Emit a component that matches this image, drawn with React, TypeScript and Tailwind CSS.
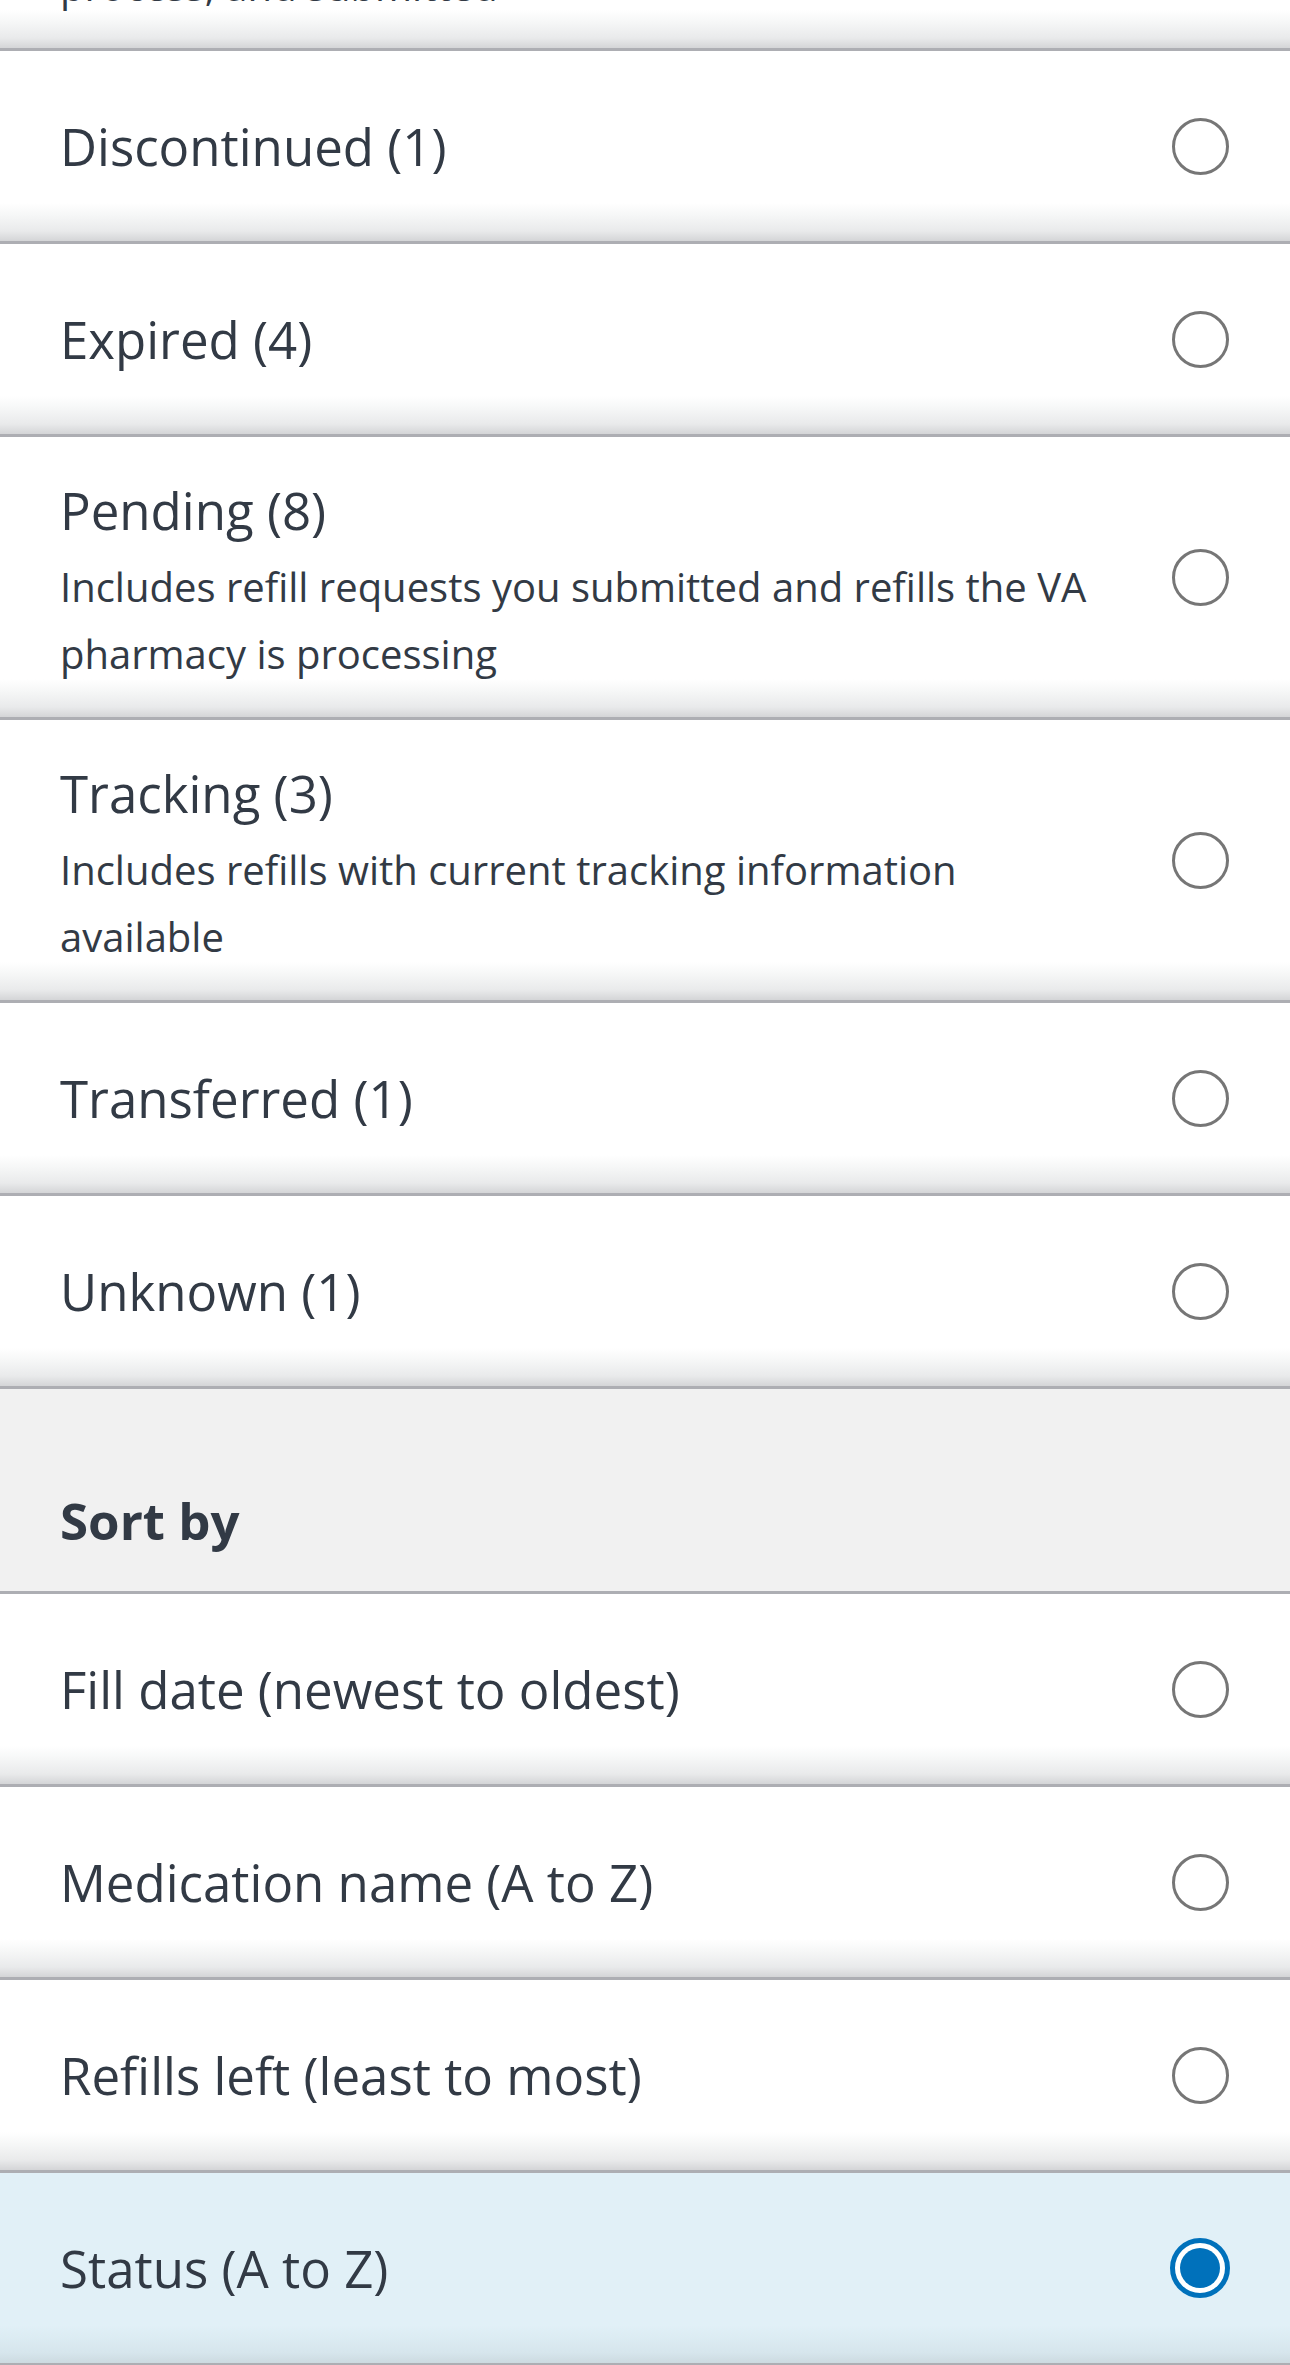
import React from "react";

type Item = { title: string; desc?: string[]; selected?: boolean };

const filters: Item[] = [
  { title: "Discontinued (1)" },
  { title: "Expired (4)" },
  {
    title: "Pending (8)",
    desc: [
      "Includes refill requests you submitted and refills the VA",
      "pharmacy is processing",
    ],
  },
  {
    title: "Tracking (3)",
    desc: ["Includes refills with current tracking information", "available"],
  },
  { title: "Transferred (1)" },
  { title: "Unknown (1)" },
];

const sorts: Item[] = [
  { title: "Fill date (newest to oldest)" },
  { title: "Medication name (A to Z)" },
  { title: "Refills left (least to most)" },
  { title: "Status (A to Z)", selected: true },
];

const NORMAL_BG =
  "bg-[linear-gradient(to_bottom,#ffffff_calc(100%_-_38px),#f6f7f7_calc(100%_-_26px),#e9eaeb_calc(100%_-_10px),#d4d5d7_100%)]";
const SELECTED_BG =
  "bg-[linear-gradient(to_bottom,#e1f0f7_calc(100%_-_38px),#dcecf3_calc(100%_-_26px),#d6e5ec_calc(100%_-_10px),#ccdae0_100%)]";

function Radio({ selected }: { selected?: boolean }) {
  return (
    <div className="flex h-[60px] w-[60px] shrink-0 items-center justify-center">
      {selected ? (
        <div className="flex h-[60px] w-[60px] items-center justify-center rounded-full border-[5px] border-[#0071bb] bg-white">
          <div className="h-[40px] w-[40px] rounded-full bg-[#0071bb]" />
        </div>
      ) : (
        <div className="h-[57px] w-[57px] rounded-full border-[3px] border-[#767676] bg-white" />
      )}
    </div>
  );
}

function Row({ item }: { item: Item }) {
  return (
    <div
      className={`flex items-center justify-between gap-[30px] border-b-[3px] border-[#adaeb3] pl-[60px] pr-[60px] ${
        item.desc ? "h-[283px]" : "h-[193px]"
      } ${item.selected ? SELECTED_BG : NORMAL_BG}`}
    >
      <div className={`min-w-0 flex-1 ${item.desc ? "pt-[7px]" : ""}`}>
        <div className="text-[51px] leading-[70px] text-[#323a45]">{item.title}</div>
        {item.desc && (
          <div className="mt-[8px] text-[40px] leading-[67px] text-[#323a45]">
            {item.desc.map((line, i) => (
              <div key={i} className="whitespace-nowrap">
                {line}
              </div>
            ))}
          </div>
        )}
      </div>
      <Radio selected={item.selected} />
    </div>
  );
}

export default function App() {
  return (
    <div className="w-[1290px] overflow-hidden bg-white font-['Open_Sans',sans-serif]">
      {/* tail of previous option */}
      <div className={`h-[51px] overflow-hidden border-b-[3px] border-[#adaeb3] pl-[60px] ${NORMAL_BG}`}>
        <div className="-mt-[48px] text-[40px] leading-[67px] text-[#323a45]">
          process, and submitted
        </div>
      </div>

      {filters.map((f) => (
        <Row key={f.title} item={f} />
      ))}

      <div className="h-[205px] border-b-[3px] border-[#adaeb3] bg-[#f1f1f1] pl-[60px] pt-[96px]">
        <div className="text-[51px] font-bold leading-[70px] text-[#323a45]">Sort by</div>
      </div>

      {sorts.map((s) => (
        <Row key={s.title} item={s} />
      ))}
    </div>
  );
}
